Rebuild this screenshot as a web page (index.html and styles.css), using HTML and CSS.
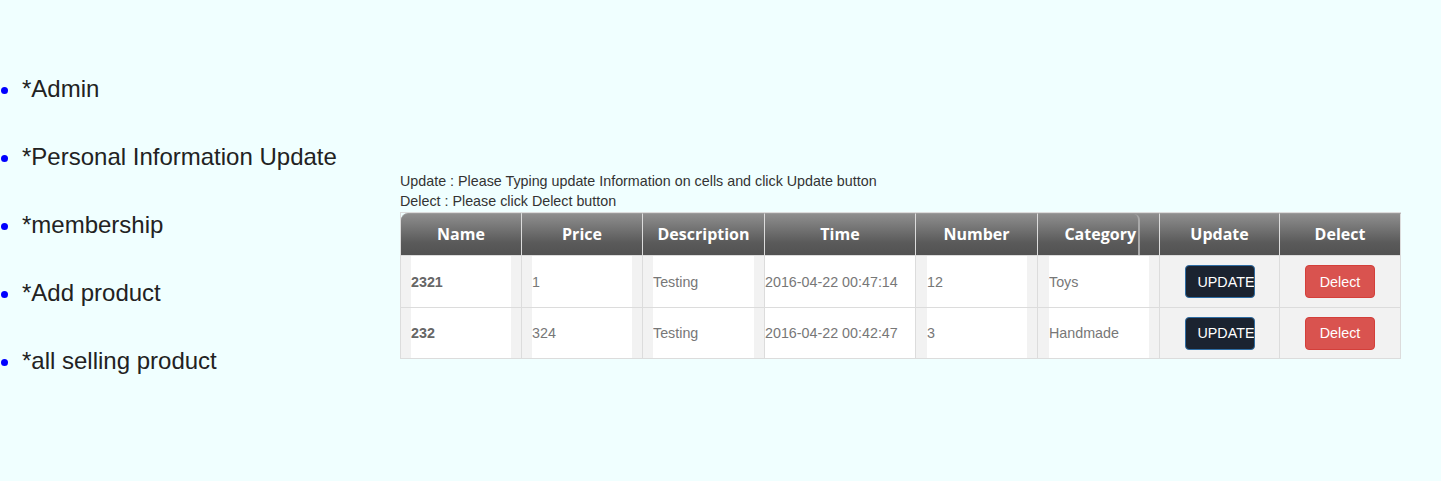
FILE: index.html
```html
<!DOCTYPE html>
<html>
<head>
<meta charset="utf-8">
<link rel="stylesheet" href="styles.css">
</head>
<body>
<div class="page">
  <ul class="menu">
    <li>*Admin</li>
    <li>*Personal Information Update</li>
    <li>*membership</li>
    <li>*Add product</li>
    <li>*all selling product</li>
  </ul>
  <div class="main">
    <p class="note">Update : Please Typing update Information on cells and click Update button</p>
    <p class="note last">Delect : Please click Delect button</p>
    <table class="grid">
      <colgroup>
        <col class="c121"><col class="c121"><col class="c122"><col class="c151"><col class="c122"><col class="c122"><col class="c120"><col class="c121">
      </colgroup>
      <thead>
        <tr>
          <th class="first">Name</th>
          <th>Price</th>
          <th>Description</th>
          <th>Time</th>
          <th>Number</th>
          <th class="category"><span class="cat-label">Category</span></th>
          <th>Update</th>
          <th>Delect</th>
        </tr>
      </thead>
      <tbody>
        <tr>
          <td><div class="box bold">2321</div></td>
          <td><div class="box">1</div></td>
          <td><div class="box">Testing</div></td>
          <td class="flush"><div class="box">2016-04-22 00:47:14</div></td>
          <td class="pad11"><div class="box">12</div></td>
          <td class="pad11"><div class="box">Toys</div></td>
          <td class="action"><button class="btn btn-update">UPDATE</button></td>
          <td class="action"><button class="btn btn-delect">Delect</button></td>
        </tr>
        <tr>
          <td><div class="box bold">232</div></td>
          <td><div class="box">324</div></td>
          <td><div class="box">Testing</div></td>
          <td class="flush"><div class="box">2016-04-22 00:42:47</div></td>
          <td class="pad11"><div class="box">3</div></td>
          <td class="pad11"><div class="box">Handmade</div></td>
          <td class="action"><button class="btn btn-update">UPDATE</button></td>
          <td class="action"><button class="btn btn-delect">Delect</button></td>
        </tr>
      </tbody>
    </table>
  </div>
</div>
</body>
</html>
```

FILE: styles.css
```css
html, body {
  margin: 0;
  padding: 0;
  background: #f0ffff;
  font-family: "Liberation Sans", Arial, sans-serif;
}

.page {
  display: flex;
  align-items: flex-start;
}

.menu {
  width: 400px;
  flex: 0 0 400px;
  box-sizing: border-box;
  margin: 75px 0 0 0;
  padding: 0 0 0 22px;
  font-size: 24px;
  line-height: 28px;
  color: #222;
}

.menu li {
  margin-bottom: 40px;
}

.menu li::marker {
  color: #0000ff;
}

.main {
  padding-top: 171px;
}

.note {
  margin: 0;
  font-size: 14.3px;
  line-height: 20px;
  color: #333;
}

.note.last {
  margin-bottom: 1px;
}

.grid {
  width: 1000px;
  table-layout: fixed;
  border-collapse: separate;
  border-spacing: 0;
  border-top: 1px solid #dcdcdc;
  border-left: 1px solid #dcdcdc;
}

.c121 { width: 121px; }
.c122 { width: 122px; }
.c151 { width: 151px; }
.c120 { width: 120px; }

.grid th {
  height: 43px;
  padding: 0 0 2px 0;
  box-sizing: border-box;
  background: linear-gradient(#8e8e8e, #5a5a5a 70%, #525252);
  color: #fff;
  font-family: "Open Sans", "DejaVu Sans", sans-serif;
  font-weight: bold;
  font-size: 16px;
  text-align: center;
  border-right: 1px solid #dcdcdc;
  border-bottom: 1px solid #dcdcdc;
  border-top: 1px solid #9a9a9a;
}

.grid th.first {
  border-top-left-radius: 7px;
}

.grid th.category {
  text-align: left;
  padding: 0;
}

.cat-label {
  display: block;
  width: 98px;
  height: 41px;
  line-height: 40px;
  padding-right: 2px;
  text-align: right;
  border-right: 2px solid #a8a8a8;
  border-top-right-radius: 6px;
  box-sizing: content-box;
}

.grid td {
  height: 52px;
  padding: 0 10px;
  box-sizing: border-box;
  background: #f2f2f2;
  border-right: 1px solid #dcdcdc;
  border-bottom: 1px solid #dcdcdc;
  font-size: 14.3px;
  color: #777;
}

.grid tbody tr:last-child td {
  height: 51px;
}

.grid td.flush {
  padding: 0;
}

.grid td.pad11 {
  padding: 0 10px 0 11px;
}

.box {
  height: 51px;
  background: #fff;
  display: flex;
  align-items: center;
  white-space: nowrap;
  overflow: hidden;
}

.grid tbody tr:last-child .box {
  height: 50px;
}

.box.bold {
  font-weight: bold;
  color: #666;
}

.grid td.action {
  text-align: center;
  padding: 0;
}

.btn {
  width: 70px;
  height: 33px;
  box-sizing: border-box;
  border-radius: 4px;
  font-family: "Liberation Sans", Arial, sans-serif;
  font-size: 14.3px;
  color: #fff;
  white-space: nowrap;
  overflow: hidden;
  cursor: pointer;
  vertical-align: middle;
}

.btn-update {
  background: #1b2330;
  border: 1px solid #2e6da4;
  text-align: left;
  padding: 0 0 0 12px;
}

.btn-delect {
  background: #d9534f;
  border: 1px solid #d43f3a;
  padding: 0;
}
```
